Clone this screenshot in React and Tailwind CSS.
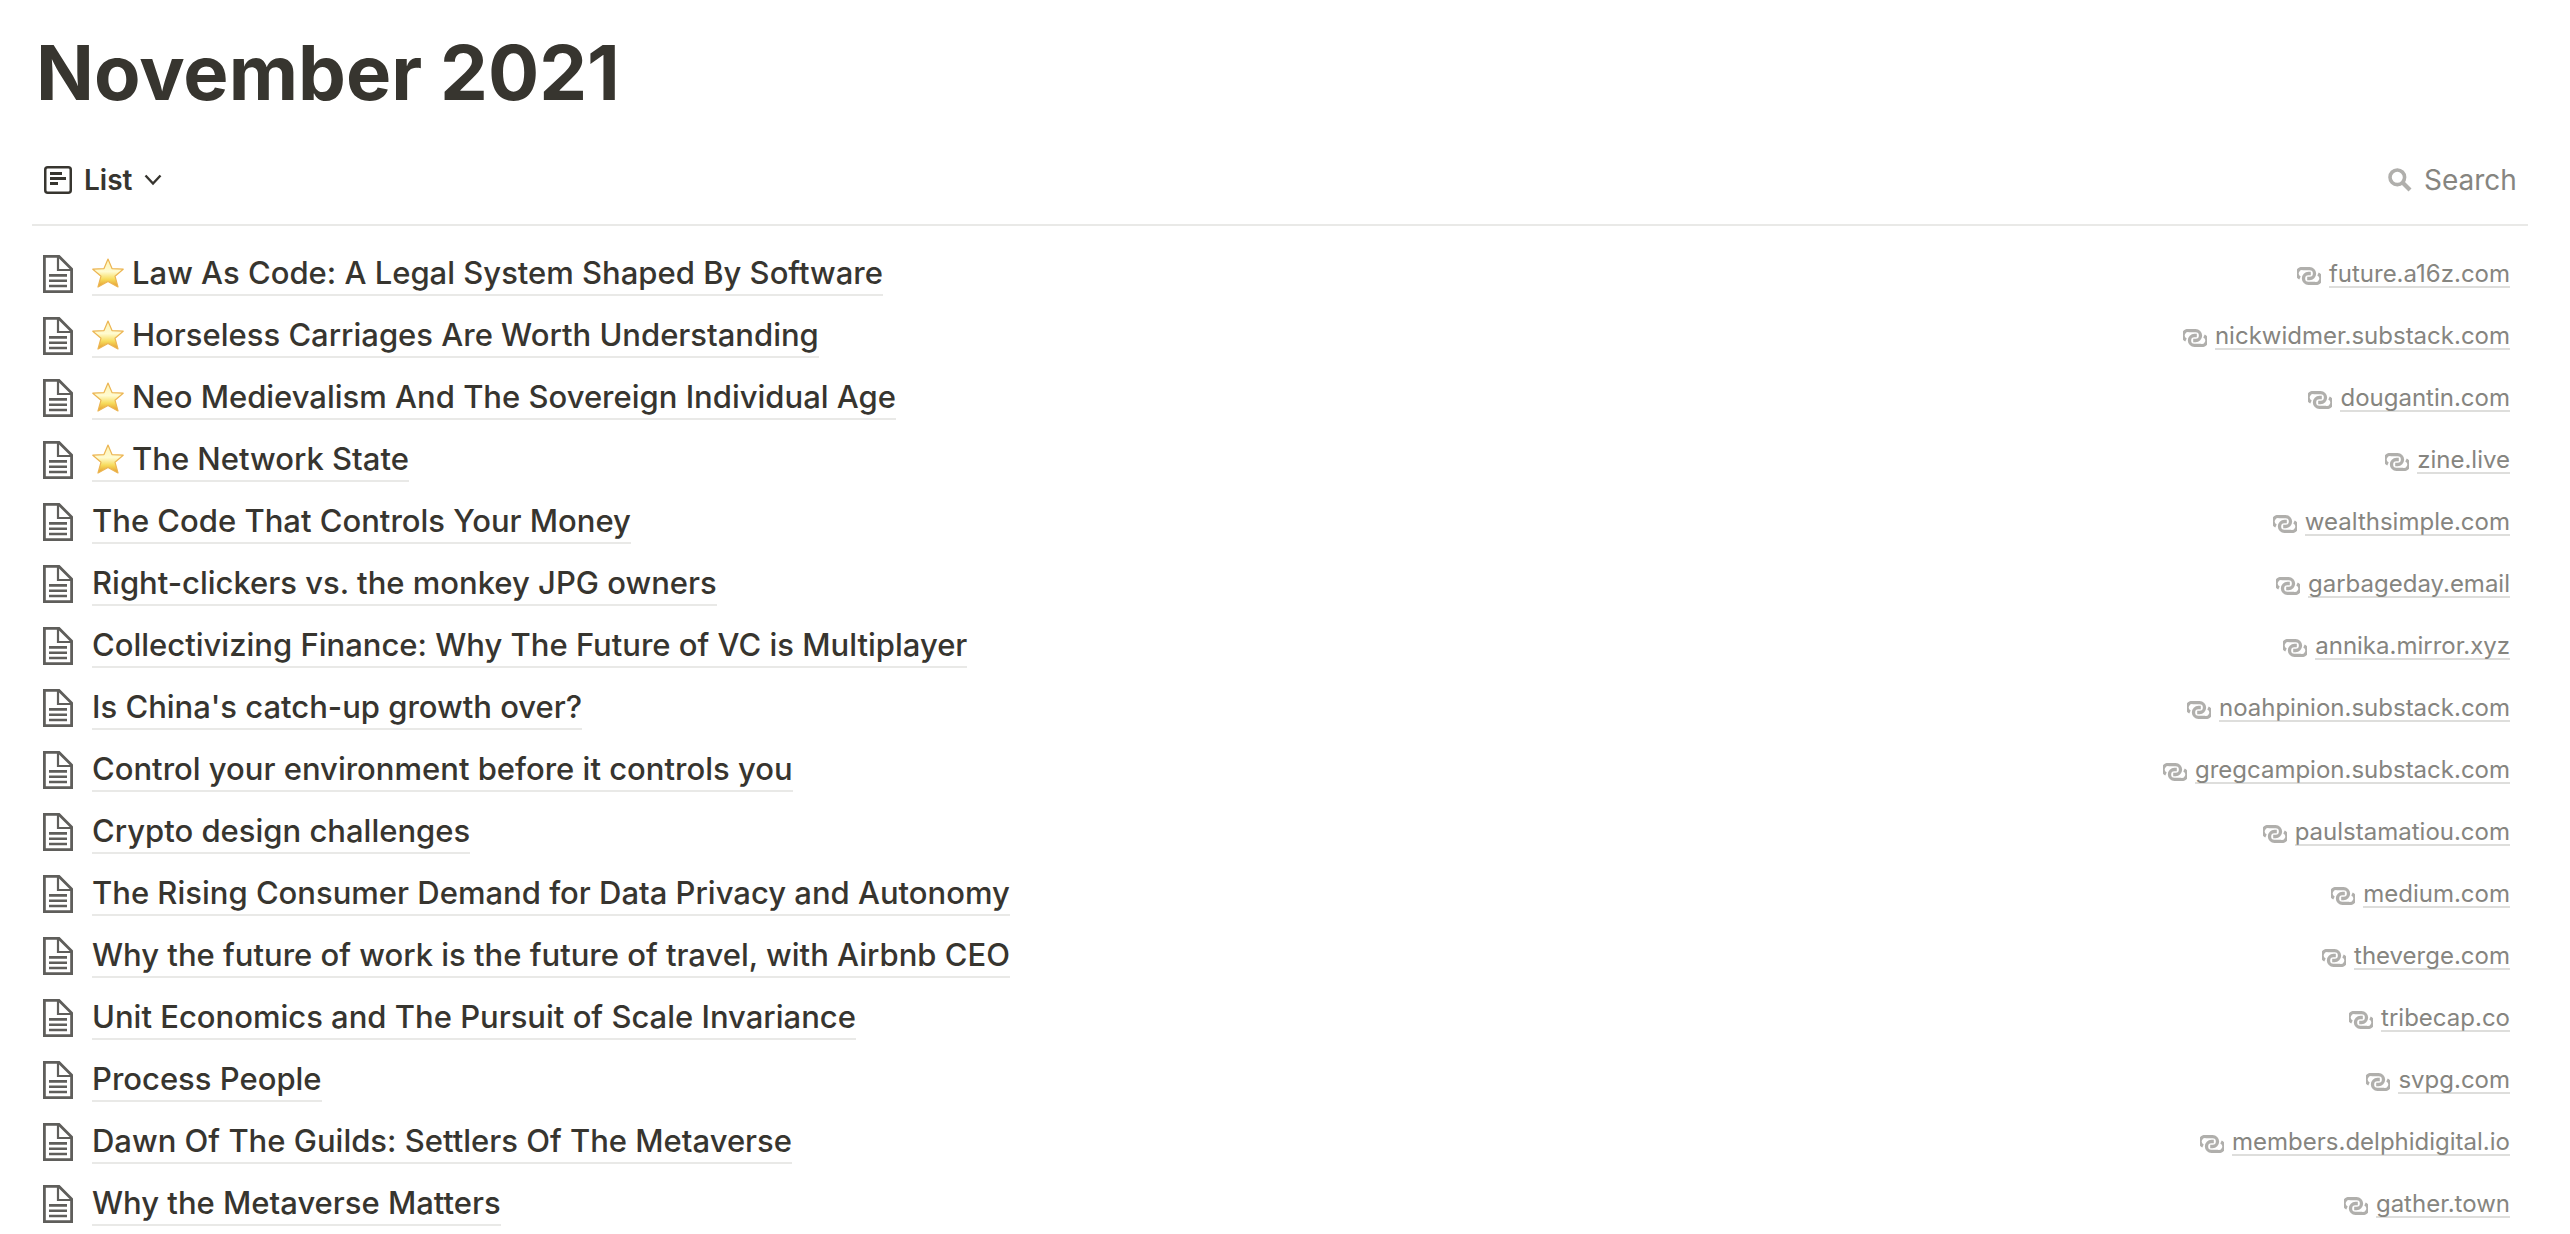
import React, { useState } from 'react';

const articles = [
  { title: 'Law As Code: A Legal System Shaped By Software', starred: true, domain: 'future.a16z.com' },
  { title: 'Horseless Carriages Are Worth Understanding', starred: true, domain: 'nickwidmer.substack.com' },
  { title: 'Neo Medievalism And The Sovereign Individual Age', starred: true, domain: 'dougantin.com' },
  { title: 'The Network State', starred: true, domain: 'zine.live' },
  { title: 'The Code That Controls Your Money', domain: 'wealthsimple.com' },
  { title: 'Right-clickers vs. the monkey JPG owners', domain: 'garbageday.email' },
  { title: 'Collectivizing Finance: Why The Future of VC is Multiplayer', domain: 'annika.mirror.xyz' },
  { title: "Is China's catch-up growth over?", domain: 'noahpinion.substack.com' },
  { title: 'Control your environment before it controls you', domain: 'gregcampion.substack.com' },
  { title: 'Crypto design challenges', domain: 'paulstamatiou.com' },
  { title: 'The Rising Consumer Demand for Data Privacy and Autonomy', domain: 'medium.com' },
  { title: 'Why the future of work is the future of travel, with Airbnb CEO', domain: 'theverge.com' },
  { title: 'Unit Economics and The Pursuit of Scale Invariance', domain: 'tribecap.co' },
  { title: 'Process People', domain: 'svpg.com' },
  { title: 'Dawn Of The Guilds: Settlers Of The Metaverse', domain: 'members.delphidigital.io' },
  { title: 'Why the Metaverse Matters', domain: 'gather.town' },
];

const ListIcon = () => (
  <svg viewBox="0 0 28 28" className="w-7 h-7 shrink-0" fill="none" aria-hidden="true">
    <rect x="1.25" y="1.25" width="25.5" height="25.5" rx="2.5" stroke="currentColor" strokeWidth="2.5" />
    <path d="M6 7.5h12M6 12.5h16M6 17.5h8" stroke="currentColor" strokeWidth="3" />
  </svg>
);

const PageIcon = () => (
  <svg viewBox="0 0 30 38" className="w-[30px] h-[38px] shrink-0" fill="none" stroke="#5f5e5b" aria-hidden="true">
    <path d="M1.4 1.4H16L28.6 14V36.6H1.4Z" strokeWidth="2.8" />
    <path d="M15 1.5V15H28.5" strokeWidth="2.2" />
    <path d="M6 20.4H24M6 25.7H24M6 31H24" strokeWidth="2.6" />
  </svg>
);

const StarIcon = () => (
  <svg viewBox="0 0 32 30" className="w-8 h-[30px] shrink-0" role="img" aria-label="Starred">
    <defs>
      <linearGradient id="starFill" x1="0" y1="0" x2="0" y2="1">
        <stop offset="0" stopColor="#fdf3b4" />
        <stop offset="0.45" stopColor="#fffbd0" />
        <stop offset="0.72" stopColor="#f7dc5c" />
        <stop offset="1" stopColor="#e39a2c" />
      </linearGradient>
    </defs>
    <path
      d="M16 1L20 10.6L31.2 11.2L23 18.2L26 29L16 23.4L6 29L9 18.2L.8 11.2L12 10.6Z"
      fill="url(#starFill)"
      stroke="#ecb552"
      strokeWidth="1.2"
      strokeLinejoin="round"
    />
  </svg>
);

const LinkIcon = () => (
  <svg viewBox="0 0 24 18" className="w-6 h-[18px] mt-1 shrink-0" fill="none" stroke="#b0afac" strokeWidth="3.3" aria-hidden="true">
    <path d="M3 11A5 5 0 0 1 6.6 1.7H12.6A4.9 4.9 0 0 1 12.6 11.5H10.2" />
    <path d="M21 7A5 5 0 0 1 17.4 16.3H11.4A4.9 4.9 0 0 1 11.4 6.5H13.8" />
  </svg>
);

const SearchIcon = () => (
  <svg viewBox="0 0 24 24" className="w-6 h-6 shrink-0" fill="none" stroke="#b0afac" aria-hidden="true">
    <circle cx="9.3" cy="9.3" r="7.3" strokeWidth="3.6" />
    <path d="M14.5 14.5L22 22" strokeWidth="4.2" />
  </svg>
);

const App = () => {
  const [search, setSearch] = useState('');

  const filteredArticles = articles.filter(a =>
    a.title.toLowerCase().includes(search.toLowerCase())
  );

  return (
    <div className="bg-white text-[#37352f] font-['Inter','Liberation_Sans',sans-serif] pl-8 pr-[42px] pt-6 overflow-hidden">
      <h1 className="text-[76px] leading-[96px] font-bold px-1">November 2021</h1>

      <div className="flex items-center justify-between mt-6 h-[82px] border-b-2 border-[#e9e9e7] px-3 pb-2">
        <button className="flex items-center gap-3 text-[28px] leading-10 font-semibold">
          <ListIcon />
          List
          <svg viewBox="0 0 18 12" className="w-[18px] h-3" fill="none" aria-hidden="true">
            <path d="M1.5 1.5L9 9.5L16.5 1.5" stroke="currentColor" strokeWidth="2.4" />
          </svg>
        </button>
        <label className="flex items-center gap-3 text-[28px] leading-10">
          <SearchIcon />
          <input
            type="text"
            aria-label="Search"
            placeholder="Search"
            value={search}
            onChange={(e) => setSearch(e.target.value)}
            className="w-[92px] outline-none placeholder:text-[#868580]"
          />
        </label>
      </div>

      <ul className="pt-[17px]">
        {filteredArticles.map(a => (
          <li key={a.title} className="flex items-center justify-between h-[62px] pl-[11px] pr-[18px]">
            <div className="flex items-center gap-[19px]">
              <PageIcon />
              <a href="#" className="flex items-center gap-2 text-[31px] leading-[42px] font-medium border-b-2 border-[#e9e9e7]">
                {a.starred && <StarIcon />}
                {a.title}
              </a>
            </div>
            <div className="flex items-center gap-2">
              <LinkIcon />
              <a href={`https://${a.domain}`} className="pt-0.5 text-2xl leading-6 text-[#868580] border-b-2 border-[#dededc]">
                {a.domain}
              </a>
            </div>
          </li>
        ))}
      </ul>
    </div>
  );
};

export default App;
